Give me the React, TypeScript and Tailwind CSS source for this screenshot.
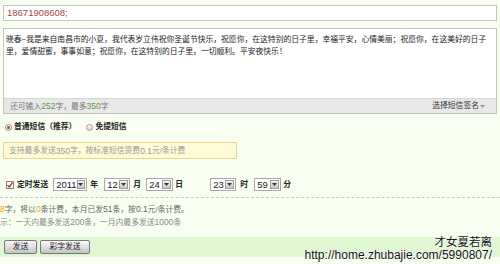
import React from "react";

const font = { fontFamily: '"Liberation Sans", "Noto Sans CJK SC", sans-serif' };

function Sel({ v, w }: { v: string; w: string }) {
  return (
    <div className={`flex h-[13px] items-center justify-between border border-[#a8a8a8] bg-white ${w}`}>
      <span className="pl-[2px] text-[9.5px] leading-[11px] text-[#222]">{v}</span>
      <span className="mr-[1px] flex h-[9px] w-[9px] items-center justify-center border border-[#9a9a9a] bg-gradient-to-b from-[#f4f4f4] to-[#c8c8c8]">
        <svg width="5" height="3" viewBox="0 0 5 3">
          <path d="M0 0h5L2.5 3z" fill="#333" />
        </svg>
      </span>
    </div>
  );
}

export default function App() {
  const txt = "text-[7.8px] leading-[12px]";
  return (
    <div className="relative h-[264px] w-[500px] overflow-hidden bg-[#f8fff1]" style={font}>
      <div className="px-[3px] pt-[5px]">
        <div className="flex h-[16px] items-center border border-[#c4c4c4] bg-white pl-[3px]">
          <span className="text-[9.5px] leading-[12px] text-[#a4464a]">18671908608;</span>
        </div>
        <div className="mt-[7px] flex h-[86px] flex-col border border-[#c4c4c4] bg-white">
          <div className={`h-[69px] pl-[2px] pr-[4px] pt-[5px] ${txt} text-[#222]`}>
            <div className="whitespace-nowrap">晓春~我是来自南昌市的小夏，我代表岁立伟祝你圣诞节快乐，祝愿你，在这特别的日子里，幸福平安，心情美丽；祝愿你，在这美好的日子</div>
            <div className="whitespace-nowrap">里，爱情甜蜜，事事如意；祝愿你，在这特别的日子里，一切顺利。平安夜快乐！</div>
          </div>
          <div className={`flex flex-1 items-center justify-between border-t border-[#d4d4d4] bg-[#e8e8e8] px-[6px] ${txt} text-[#777]`}>
            <span>
              还可输入<span className="text-[8.5px] text-[#5c9a3c]">252</span>字，最多<span className="text-[8.5px] text-[#5c9a3c]">350</span>字
            </span>
            <span className="mr-[5px] flex items-center text-[#333]">
              选择短信签名
              <svg width="5" height="3" viewBox="0 0 5 3" className="ml-[1px]">
                <path d="M0 0h5L2.5 3z" fill="#999" />
              </svg>
            </span>
          </div>
        </div>

        <div className={`mt-[8px] flex h-[10px] items-center ${txt}`}>
          <span className="ml-[2px] flex h-[7px] w-[7px] items-center justify-center rounded-full border border-[#888] bg-white">
            <span className="h-[3px] w-[3px] rounded-full bg-[#c0302c]" />
          </span>
          <span className="ml-[2px] font-bold text-[#222]">普通短信（推荐）</span>
          <span className="ml-[10px] h-[7px] w-[7px] rounded-full border border-[#b88] bg-gradient-to-b from-[#fff] to-[#e8c8c8]" />
          <span className="ml-[2px] font-bold text-[#222]">免提短信</span>
        </div>

        <div className={`mt-[10px] flex h-[17px] w-[234px] items-center border border-[#e4d590] bg-[#fffbd6] pl-[5px] ${txt} text-[#999]`}>
          支持最多发送<span className="text-[8.5px]">350</span>字，按标准短信资费<span className="text-[8.5px]">0.1</span>元/条计费
        </div>

        <div className={`mt-[19px] flex h-[13px] items-center ${txt} text-[#222]`}>
          <span className="ml-[3px] flex h-[8px] w-[8px] items-center justify-center border border-[#888] bg-white">
            <svg width="6" height="6" viewBox="0 0 6 6">
              <path d="M0.5 3L2.3 5L5.5 0.5" fill="none" stroke="#c0302c" strokeWidth="1.3" />
            </svg>
          </span>
          <span className="ml-[3px] font-bold">定时发送</span>
          <span className="ml-[5px]"><Sel v="2011" w="w-[34px]" /></span>
          <span className="ml-[3px] w-[8px] font-bold">年</span>
          <span className="ml-[6px]"><Sel v="12" w="w-[26px]" /></span>
          <span className="ml-[3px] w-[8px] font-bold">月</span>
          <span className="ml-[5px]"><Sel v="24" w="w-[27px]" /></span>
          <span className="ml-[2px] w-[8px] font-bold">日</span>
          <span className="ml-[27px]"><Sel v="23" w="w-[26px]" /></span>
          <span className="ml-[4px] w-[8px] font-bold">时</span>
          <span className="ml-[6px]"><Sel v="59" w="w-[27px]" /></span>
          <span className="ml-[2px] w-[8px] font-bold">分</span>
        </div>
      </div>

      <div className="mt-[6px] border-t border-dashed border-[#c8c8c8]" />

      <div className={`mt-[5px] ${txt} whitespace-nowrap text-[#666]`}>
        <div>
          <span className="text-[8.5px] text-[#f0a020]">8</span>字，将以<span className="text-[8.5px] text-[#f0a020]">0</span>条计费，本月已发<span className="text-[8.5px]">51</span>条，按<span className="text-[8.5px]">0.1</span>元/条计费。
        </div>
        <div className="text-[#888]">
          示：一天内最多发送<span className="text-[8.5px]">200</span>条，一月内最多发送<span className="text-[8.5px]">1000</span>条
        </div>
      </div>

      <div className="mt-[8px] flex h-[20px] items-center gap-[3px] bg-[#dff7d2] pl-[4px]">
        <button className={`flex h-[14px] w-[33px] items-center justify-center rounded-[2px] border border-[#777] bg-gradient-to-b from-[#fafafa] to-[#c4c4c4] ${txt} text-[#222]`}>
          发送
        </button>
        <button className={`flex h-[14px] w-[50px] items-center justify-center rounded-[2px] border border-[#777] bg-gradient-to-b from-[#fafafa] to-[#c4c4c4] ${txt} text-[#222]`}>
          彩字发送
        </button>
      </div>

      <div
        className="absolute right-[8px] top-[236px] flex flex-col items-end text-[#111]"
        style={{ textShadow: "0 0 2px #fff, 0 0 2px #fff, 0 0 1px #fff" }}
      >
        <span className="text-[11.5px] leading-[13px]">才女夏若离</span>
        <span className="text-[12px] leading-[13px]">http://home.zhubajie.com/5990807/</span>
      </div>
    </div>
  );
}
